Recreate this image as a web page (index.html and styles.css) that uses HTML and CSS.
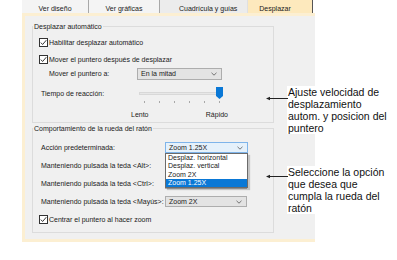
FILE: index.html
```html
<!DOCTYPE html>
<html lang="es">
<head>
    <meta charset="UTF-8">
    <title>Desplazar</title>
    <link rel="stylesheet" href="styles.css">
</head>
<body>
    <div class="dialog">
        <div class="tabs">
            <div class="tab tab-1">Ver diseño</div>
            <div class="tab tab-2">Ver gráficas</div>
            <div class="tab tab-3">Cuadrícula y guías</div>
            <div class="tab tab-active">Desplazar</div>
        </div>
        <div class="panel">
            <fieldset class="group group-auto">
                <legend>Desplazar automático</legend>
                <div class="row check-row">
                    <span class="check"><svg width="9" height="9" viewBox="0 0 9 9"><path d="M1.8 4.6 L3.6 6.5 L7.3 2.2" fill="none" stroke="#222" stroke-width="0.9"/></svg></span>
                    Habilitar desplazar automático
                </div>
                <div class="row check-row row-gap">
                    <span class="check"><svg width="9" height="9" viewBox="0 0 9 9"><path d="M1.8 4.6 L3.6 6.5 L7.3 2.2" fill="none" stroke="#222" stroke-width="0.9"/></svg></span>
                    Mover el puntero después de desplazar
                </div>
                <div class="row row-mover">
                    <span class="label label-indent">Mover el puntero a:</span>
                    <div class="select select-wide">
                        <span>En la mitad</span>
                        <svg class="chev" width="6" height="4" viewBox="0 0 6 4"><path d="M0.5 0.8 L3 3.2 L5.5 0.8" fill="none" stroke="#555" stroke-width="0.8"/></svg>
                    </div>
                </div>
                <div class="row row-slider">
                    <span class="label label-slider">Tiempo de reacción:</span>
                    <div class="slider">
                        <div class="track"></div>
                        <svg class="thumb" width="7" height="12" viewBox="0 0 7 12"><path d="M0 0 H7 V9 L3.5 12 L0 9 Z" fill="#0a78d6"/></svg>
                    </div>
                </div>
                <div class="ticks">
                    <i></i><i></i><i></i><i></i><i></i><i></i>
                </div>
                <div class="speed">
                    <span>Lento</span>
                    <span>Rápido</span>
                </div>
            </fieldset>

            <fieldset class="group group-wheel">
                <legend>Comportamiento de la rueda del ratón</legend>
                <div class="row wheel-row">
                    <span class="label label-wheel">Acción predeterminada:</span>
                    <div class="select select-focus">
                        <span>Zoom 1.25X</span>
                        <svg class="chev" width="6" height="4" viewBox="0 0 6 4"><path d="M0.5 0.8 L3 3.2 L5.5 0.8" fill="none" stroke="#555" stroke-width="0.8"/></svg>
                        <ul class="dropdown">
                            <li>Desplaz. horizontal</li>
                            <li>Desplaz. vertical</li>
                            <li>Zoom 2X</li>
                            <li class="selected">Zoom 1.25X</li>
                        </ul>
                    </div>
                </div>
                <div class="row wheel-row row-gap">
                    <span class="label label-wheel">Manteniendo pulsada la teda &lt;Alt&gt;:</span>
                    <!-- covered by the open list -->
                    <div class="select"></div>
                </div>
                <div class="row wheel-row row-gap">
                    <span class="label label-wheel">Manteniendo pulsada la teda &lt;Ctrl&gt;:</span>
                    <div class="select"></div>
                </div>
                <div class="row wheel-row row-gap">
                    <span class="label label-wheel">Manteniendo pulsada la teda &lt;Mayús&gt;:</span>
                    <div class="select">
                        <span>Zoom 2X</span>
                        <svg class="chev" width="6" height="4" viewBox="0 0 6 4"><path d="M0.5 0.8 L3 3.2 L5.5 0.8" fill="none" stroke="#555" stroke-width="0.8"/></svg>
                    </div>
                </div>
                <div class="row check-row wheel-row row-gap">
                    <span class="check"><svg width="9" height="9" viewBox="0 0 9 9"><path d="M1.8 4.6 L3.6 6.5 L7.3 2.2" fill="none" stroke="#222" stroke-width="0.9"/></svg></span>
                    Centrar el puntero al hacer zoom
                </div>
            </fieldset>
        </div>
    </div>

    <div class="callout callout-speed">
        <svg class="arrow" width="22" height="5" viewBox="0 0 22 5"><path d="M3 2.5 H22" stroke="#222" stroke-width="1"/><path d="M0 2.5 L4 0.8 L4 4.2 Z" fill="#222"/></svg>
        Ajuste velocidad de<br>desplazamiento<br>autom. y posicion del<br>puntero
    </div>
    <div class="callout callout-wheel">
        <svg class="arrow" width="22" height="5" viewBox="0 0 22 5"><path d="M3 2.5 H22" stroke="#222" stroke-width="1"/><path d="M0 2.5 L4 0.8 L4 4.2 Z" fill="#222"/></svg>
        Seleccione la opción<br>que desea que<br>cumpla la rueda del<br>ratón
    </div>
</body>
</html>
```

FILE: styles.css
```css
body {
    margin: 0;
    width: 397px;
    height: 260px;
    background: #fff;
    font-family: "Liberation Sans", Arial, sans-serif;
    font-size: 7px;
    color: #1a1a1a;
    position: relative;
    overflow: hidden;
}
.dialog {
    margin-left: 22px;
    width: 293px;
}
.tabs {
    display: flex;
    height: 13px;
}
.tab {
    display: flex;
    align-items: center;
    justify-content: center;
    box-sizing: border-box;
    padding-top: 3px;
    background: #f4f4f4;
    border-right: 1px solid #a8a8a8;
    white-space: nowrap;
}
.tab-1 {
    width: 67px;
}
.tab-2 {
    width: 71px;
}
.tab-3 {
    width: 88px;
    background: #ececec;
    border-right-color: #e0e0e0;
    justify-content: flex-start;
    padding-left: 19px;
}
.tab-active {
    width: 65px;
    background: #fde9bd;
    border-right: 1px solid #555;
    padding-right: 10px;
}
.panel {
    background: #f0f0f0;
    border: 3px solid #fcefd2;
    border-right: 0;
    padding: 0 0 6px 7px;
}
.group {
    box-sizing: border-box;
    width: 242px;
    margin: 0;
    border: 1px solid #dcdcdc;
    min-inline-size: 0;
}
.group legend {
    margin-left: -6px;
    padding: 0 1px;
    line-height: 9px;
    font-size: 7px;
}
.group-auto {
    margin-top: 6px;
    padding: 5px 0 3px 6px;
}
.group-wheel {
    margin-top: 1px;
    padding: 8px 0 6px 6px;
}
.row {
    display: flex;
    align-items: center;
    height: 12px;
    white-space: nowrap;
}
.row-gap {
    margin-top: 5px;
}
.check {
    display: inline-flex;
    width: 9px;
    height: 9px;
    box-sizing: border-box;
    border: 1px solid #333;
    background: #fff;
    margin-right: 1px;
}
.check svg {
    margin: -1px;
}
.row-mover {
    margin-top: 2px;
    height: 13px;
}
.label {
    display: block;
    box-sizing: border-box;
}
.label-indent {
    width: 98px;
    padding-left: 10px;
}
.label-slider {
    width: 100px;
    padding-left: 2px;
}
.label-wheel {
    width: 126px;
    padding-left: 2px;
}
.select {
    position: relative;
    box-sizing: border-box;
    width: 82px;
    height: 11px;
    display: flex;
    align-items: center;
    padding-left: 3px;
    background: #e3e3e3;
    border: 1px solid #adadad;
}
.select-wide {
    width: 85px;
    height: 12px;
}
.select-focus {
    width: 83px;
    background: #e5f1fb;
    border-color: #7eb4ea;
}
.chev {
    position: absolute;
    right: 4px;
    top: 3px;
}
.wheel-row {
    height: 13px;
}
.row-slider {
    margin-top: 7px;
}
.slider {
    position: relative;
    width: 83px;
    height: 12px;
}
.track {
    margin-top: 5px;
    height: 3px;
    box-sizing: border-box;
    background: #e7e7e7;
    border: 1px solid #d8d8d8;
}
.thumb {
    position: absolute;
    left: 77px;
    top: 0;
}
.ticks {
    display: flex;
    justify-content: space-between;
    width: 76px;
    height: 2px;
    margin: 2px 0 0 105px;
}
.ticks i {
    width: 1px;
    background: #a8a8a8;
}
.speed {
    display: flex;
    justify-content: space-between;
    width: 97px;
    height: 8px;
    line-height: 8px;
    margin: 8px 0 0 92px;
}
.dropdown {
    position: absolute;
    left: -1px;
    top: 10px;
    width: 83px;
    margin: 0;
    padding: 0;
    list-style: none;
    box-sizing: border-box;
    background: #fff;
    border: 1px solid #6b6b6b;
    box-shadow: 2px 2px 1px rgba(0, 0, 0, 0.18);
    z-index: 2;
}
.dropdown li {
    height: 8.25px;
    line-height: 8.25px;
    padding-left: 2px;
}
.dropdown .selected {
    background: #0a78d6;
    color: #fff;
}
.callout {
    position: absolute;
    left: 287px;
    background: #fff;
    font-size: 10.5px;
    line-height: 12px;
    padding-left: 1px;
    padding-right: 4px;
    color: #111;
}
.callout-speed {
    top: 86px;
}
.callout-wheel {
    top: 166px;
}
.arrow {
    position: absolute;
    left: -21px;
}
.callout-speed .arrow {
    top: 10px;
}
.callout-wheel .arrow {
    top: 8px;
}
```
